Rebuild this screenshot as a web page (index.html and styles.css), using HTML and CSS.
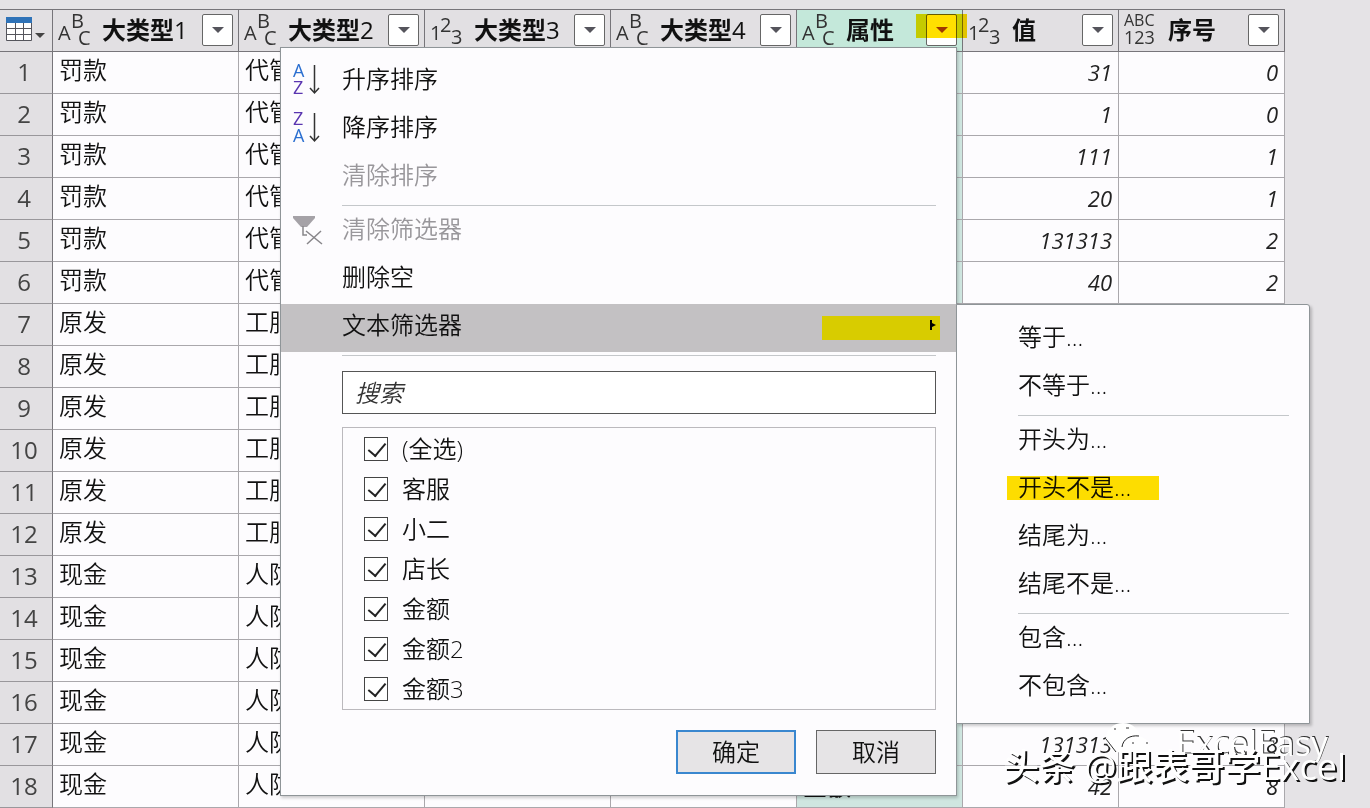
FILE: index.html
```html
<!DOCTYPE html>
<html lang="zh-CN">
<head>
    <meta charset="UTF-8">
    <title>文本筛选器</title>
    <link rel="stylesheet" href="styles.css">
</head>
<body>
    <div class="sheet">
        <table class="grid">
            <colgroup>
                <col class="c-num"><col class="c-type"><col class="c-type"><col class="c-type"><col class="c-type"><col class="c-attr"><col class="c-value"><col class="c-attr">
            </colgroup>
            <thead>
                <tr>
                    <th class="corner">
                        <svg width="40" height="26" viewBox="0 0 40 26">
                            <path fill="#fff" d="M1 1h25v22H1z"/>
                            <path fill="#2f73b8" d="M0 0h26v6H0z"/>
                            <path fill="none" stroke="#55555c" d="M.5 6v17.500h25V6M1 11.500h24M1 17.500h24M9.500 6v17M17.500 6v17"/>
                            <path fill="#444" d="M29 16h10l-5 5z"/>
                        </svg>
                    </th>
                    <th><div class="head"><svg class="type"><text x="0" y="27">A</text><text x="13" y="15">B</text><text x="20" y="32">C</text></svg><span>大类型<small>1</small></span><button class="drop" aria-label="筛选"><svg><path d="M0 0h12L6 6z"/></svg></button></div></th>
                    <th><div class="head"><svg class="type"><text x="0" y="27">A</text><text x="13" y="15">B</text><text x="20" y="32">C</text></svg><span>大类型<small>2</small></span><button class="drop" aria-label="筛选"><svg><path d="M0 0h12L6 6z"/></svg></button></div></th>
                    <th><div class="head"><svg class="type"><text x="0" y="27">1</text><text x="10" y="19">2</text><text x="21" y="31">3</text></svg><span>大类型<small>3</small></span><button class="drop" aria-label="筛选"><svg><path d="M0 0h12L6 6z"/></svg></button></div></th>
                    <th><div class="head"><svg class="type"><text x="0" y="27">A</text><text x="13" y="15">B</text><text x="20" y="32">C</text></svg><span>大类型<small>4</small></span><button class="drop" aria-label="筛选"><svg><path d="M0 0h12L6 6z"/></svg></button></div></th>
                    <th class="active"><div class="head"><svg class="type"><text x="0" y="27">A</text><text x="13" y="15">B</text><text x="20" y="32">C</text></svg><span>属性</span><button class="drop marked" aria-label="筛选"><svg><path d="M0 0h12L6 6z"/></svg></button></div></th>
                    <th><div class="head"><svg class="type"><text x="0" y="27">1</text><text x="10" y="19">2</text><text x="21" y="31">3</text></svg><span>值</span><button class="drop" aria-label="筛选"><svg><path d="M0 0h12L6 6z"/></svg></button></div></th>
                    <th><div class="head"><svg class="type any"><text x="0" y="13">ABC</text><text class="low" x="0" y="31">123</text></svg><span>序号</span><button class="drop" aria-label="筛选"><svg><path d="M0 0h12L6 6z"/></svg></button></div></th>
                </tr>
            </thead>
            <tbody>
                <tr><th>1</th><td>罚款</td><td>代管</td><td></td><td></td><td class="active"></td><td class="n">31</td><td class="n">0</td></tr>
                <tr><th>2</th><td>罚款</td><td>代管</td><td></td><td></td><td class="active"></td><td class="n">1</td><td class="n">0</td></tr>
                <tr><th>3</th><td>罚款</td><td>代管</td><td></td><td></td><td class="active"></td><td class="n">111</td><td class="n">1</td></tr>
                <tr><th>4</th><td>罚款</td><td>代管</td><td></td><td></td><td class="active"></td><td class="n">20</td><td class="n">1</td></tr>
                <tr><th>5</th><td>罚款</td><td>代管</td><td></td><td></td><td class="active"></td><td class="n">131313</td><td class="n">2</td></tr>
                <tr><th>6</th><td>罚款</td><td>代管</td><td></td><td></td><td class="active"></td><td class="n">40</td><td class="n">2</td></tr>
                <tr><th>7</th><td>原发</td><td>工服</td><td></td><td></td><td class="active"></td><td></td><td></td></tr>
                <tr><th>8</th><td>原发</td><td>工服</td><td></td><td></td><td class="active"></td><td></td><td></td></tr>
                <tr><th>9</th><td>原发</td><td>工服</td><td></td><td></td><td class="active"></td><td></td><td></td></tr>
                <tr><th>10</th><td>原发</td><td>工服</td><td></td><td></td><td class="active"></td><td></td><td></td></tr>
                <tr><th>11</th><td>原发</td><td>工服</td><td></td><td></td><td class="active"></td><td></td><td></td></tr>
                <tr><th>12</th><td>原发</td><td>工服</td><td></td><td></td><td class="active"></td><td></td><td></td></tr>
                <tr><th>13</th><td>现金</td><td>人防</td><td></td><td></td><td class="active"></td><td></td><td></td></tr>
                <tr><th>14</th><td>现金</td><td>人防</td><td></td><td></td><td class="active"></td><td></td><td></td></tr>
                <tr><th>15</th><td>现金</td><td>人防</td><td></td><td></td><td class="active"></td><td></td><td></td></tr>
                <tr><th>16</th><td>现金</td><td>人防</td><td></td><td></td><td class="active"></td><td></td><td></td></tr>
                <tr><th>17</th><td>现金</td><td>人防</td><td></td><td></td><td class="active"></td><td class="n">131313</td><td class="n">8</td></tr>
                <tr><th>18</th><td>现金</td><td>人防</td><td></td><td></td><td class="active current">金额</td><td class="n">42</td><td class="n">8</td></tr>
            </tbody>
        </table>

        <div class="menu">
            <button class="item">
                <svg class="icon" width="30" height="34" viewBox="0 0 30 34">
                    <text x="0" y="15" fill="#2b6fd0">A</text><text x="0" y="32" fill="#5a35b0">Z</text>
                    <path d="M21.500 3v28M17 26l4.500 5 4.500-5"/>
                </svg>升序排序
            </button>
            <button class="item">
                <svg class="icon" width="30" height="34" viewBox="0 0 30 34">
                    <text x="0" y="15" fill="#5a35b0">Z</text><text x="0" y="32" fill="#2b6fd0">A</text>
                    <path d="M21.500 3v28M17 26l4.500 5 4.500-5"/>
                </svg>降序排序
            </button>
            <button class="item" disabled>清除排序</button>
            <hr>
            <button class="item" disabled>
                <svg class="icon" width="30" height="34" viewBox="0 0 30 34">
                    <path class="funnel" d="M0 4h22v2l-8 9H8L0 6z"/>
                    <path class="cross" d="M10 14v9h4M13 19l16 13M28 19L14 32"/>
                </svg>清除筛选器
            </button>
            <button class="item">删除空</button>
            <div class="parent">
                <button class="item">文本筛选器<span class="more"><svg width="6" height="10" viewBox="0 0 6 10"><path d="M0 0h2v3l4 2-4 2v3H0z"/></svg></span></button>
                <div class="submenu">
                    <button class="item">等于...</button>
                    <button class="item">不等于...</button>
                    <hr>
                    <button class="item">开头为...</button>
                    <button class="item"><span class="marked">开头不是...</span></button>
                    <button class="item">结尾为...</button>
                    <button class="item">结尾不是...</button>
                    <hr>
                    <button class="item">包含...</button>
                    <button class="item">不包含...</button>
                </div>
            </div>
            <hr class="tight">
            <input class="search" type="text" placeholder="搜索" aria-label="搜索">
            <div class="values">
                <label><input type="checkbox" checked>(全选)</label>
                <label><input type="checkbox" checked>客服</label>
                <label><input type="checkbox" checked>小二</label>
                <label><input type="checkbox" checked>店长</label>
                <label><input type="checkbox" checked>金额</label>
                <label><input type="checkbox" checked>金额2</label>
                <label><input type="checkbox" checked>金额3</label>
            </div>
            <div class="actions">
                <button class="ok">确定</button>
                <button>取消</button>
            </div>
        </div>

        <div class="watermark">
            <div class="account">
                <svg width="48" height="40" viewBox="0 0 48 40">
                    <ellipse cx="19" cy="15" rx="17" ry="15" fill="#fff"/>
                    <ellipse cx="32" cy="25" rx="14" ry="12" fill="#fff"/>
                    <path d="M18 24c1-8 8-12 17-11" fill="none" stroke="#222"/>
                    <path d="M10 6h2M22 5h3M28 20h2M42 20h2M2 16l10 13" stroke="#333" fill="none"/>
                </svg>
                <span>ExcelEasy</span>
            </div>
            <div class="source">头条 @跟表哥学Excel</div>
        </div>
    </div>
</body>
</html>
```
FILE: styles.css
```css
* { box-sizing: border-box; }
body {
    margin: 0;
    background: #e5e3e6;
    color: #111;
    font-family: "Open Sans", "Noto Sans CJK SC", sans-serif;
    font-size: 24px;
    font-weight: 350;
    overflow: hidden;
}
button, input { font: inherit; color: inherit; }
.sheet { position: relative; padding-top: 9px; }

/* data grid */
.grid { table-layout: fixed; width: 1285px; border-collapse: separate; border-spacing: 0; }
.c-num { width: 53px; }
.c-type { width: 186px; }
.c-attr { width: 166px; }
.c-value { width: 156px; }
.grid th, .grid td {
    height: 42px;
    padding: 0 6px;
    line-height: 34px;
    border-right: 1px solid #aaa8ac;
    border-bottom: 1px solid #aaa8ac;
    white-space: nowrap;
}
.grid td { background: #fdfcfe; text-align: left; padding-bottom: 6px; }
.grid th { background: #e2e0e3; font-weight: 400; border-color: #77757a; }
.grid tbody th { padding: 0 4px 2px 0; color: #444; border-bottom-color: #99979b; }
.grid thead th { height: 43px; padding: 0 5px; border-top: 1px solid #77757a; vertical-align: top; }
.grid thead th.corner { padding: 7px 0 0 6px; }
.corner svg { display: block; }
.grid td.n { text-align: right; font-style: italic; font-size: 22px; font-weight: 400; padding-bottom: 2px; color: #222; }
.grid thead th.active { background: #c4e8da; }
.grid td.active { background: #cfe6e0; }
.grid td.current { font-weight: 700; padding-bottom: 2px; }
.head { display: flex; align-items: center; height: 40px; }
.head span { flex: 1; margin-left: 10px; font-weight: 600; text-align: left; }
.head small { font-size: 24px; font-weight: 400; }
.type { flex: none; width: 34px; height: 34px; font-size: 20px; fill: #333; overflow: visible; }
.type.any { font-size: 16px; }
.type .low { font-size: 18px; }
.drop {
    position: relative;
    display: flex;
    align-items: center;
    justify-content: center;
    width: 31px;
    height: 32px;
    padding: 0;
    background: #fff;
    border: 1px solid #666;
    border-radius: 2px;
}
.drop svg { width: 12px; height: 6px; fill: #55545c; }
.drop.marked::after {
    content: "";
    position: absolute;
    left: -11px;
    top: -1px;
    width: 51px;
    height: 24px;
    background: #ffe000;
    mix-blend-mode: multiply;
}
.drop.marked svg { fill: #a04010; }

/* filter menu */
.menu {
    position: absolute;
    top: 47px;
    left: 280px;
    width: 677px;
    padding: 7px 0 21px;
    background: #fdfcfe;
    border: 1px solid #8f9598;
    box-shadow: 1px 2px 3px #0003;
}
.item {
    position: relative;
    display: block;
    width: 100%;
    height: 48px;
    padding: 0 0 0 61px;
    border: 0;
    background: none;
    text-align: left;
    line-height: 46px;
}
.item:disabled { color: #99979b; }
.icon { position: absolute; left: 12px; top: 7px; font-size: 18px; font-weight: 400; }
.icon path { fill: none; stroke: #333; stroke-width: 1.500; }
.icon .funnel { fill: #a5a2a7; stroke: none; }
.icon .cross { stroke: #88868a; }
.menu hr { margin: 6px 20px -1px 61px; border: 0; border-top: 1px solid #c4c7ca; }
.menu hr.tight { margin: 3px 20px 0 61px; }
.parent { position: relative; margin-top: 3px; background: #c3c1c3; }
.parent > .item { padding-bottom: 6px; line-height: 42px; }
.more {
    position: absolute;
    right: 16px;
    top: 12px;
    width: 118px;
    height: 24px;
    background: #d8cc00;
}
.more svg { position: absolute; right: 4px; top: 4px; }
.submenu {
    position: absolute;
    top: 0;
    left: 100%;
    width: 354px;
    padding: 8px 0 14px;
    background: #fdfcfe;
    border: 1px solid #8f9598;
    border-radius: 0 3px 0 0;
    box-shadow: 2px 2px 3px #0003;
}
.item .marked { position: relative; }
.item .marked::after {
    content: "";
    position: absolute;
    left: -11px;
    right: -28px;
    top: 6px;
    height: 24px;
    background: #ffe000;
    mix-blend-mode: multiply;
}
.search {
    display: block;
    width: 594px;
    height: 43px;
    margin: 15px 0 0 61px;
    padding: 0 12px;
    background: #fff;
    border: 1px solid #555;
}
.search::placeholder { color: #333; font-style: italic; opacity: 1; }
.values {
    height: 283px;
    margin: 13px 20px 0 61px;
    padding-top: 1px;
    border: 1px solid #bbb9bd;
    overflow: hidden;
}
.values label { display: flex; align-items: center; gap: 14px; height: 40px; padding-left: 21px; line-height: 40px; }
.values input {
    appearance: none;
    position: relative;
    width: 24px;
    height: 24px;
    margin: 0;
    border: 1px solid #444;
    background: #fff;
}
.values input:checked::after {
    content: "";
    position: absolute;
    left: 7px;
    top: 1px;
    width: 8px;
    height: 15px;
    border: solid #222;
    border-width: 0 2px 2px 0;
    transform: rotate(40deg);
}
.actions { display: flex; justify-content: flex-end; gap: 20px; margin: 20px 20px 0 0; }
.actions button { width: 120px; height: 44px; padding: 0 0 4px; background: #e6e4e6; border: 1px solid #666; }
.actions .ok { border: 2px solid #3a87cf; }

/* watermark */
.watermark { position: absolute; right: 24px; bottom: 19px; color: #fff; white-space: nowrap; }
.account { display: flex; align-items: center; justify-content: flex-end; gap: 24px; margin-right: 18px; height: 40px; font-size: 34px; font-weight: 400; text-shadow: 1px -1px 0 #333; }
.source { margin-top: -18px; font-size: 36px; line-height: 44px; font-weight: 500; text-shadow: 2px 2px 0 #111; }
```
